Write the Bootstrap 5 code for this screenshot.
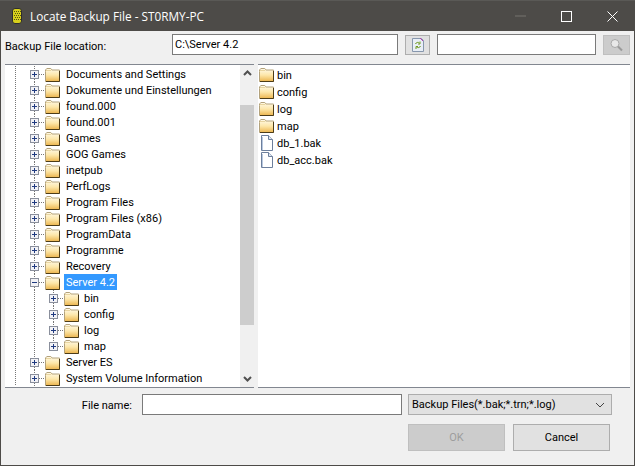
<!DOCTYPE html>
<html lang="en">
<head>
<meta charset="utf-8">
<title>Locate Backup File</title>
<link rel="stylesheet" href="https://cdn.jsdelivr.net/npm/bootstrap@5.3.0/dist/css/bootstrap.min.css">
<style>
html,body{margin:0;background:#f0f0f0;overflow:hidden}
body{font-family:Roboto,"Liberation Sans",Arial,sans-serif;font-size:11px;line-height:16px;color:#000}
.dlg{width:635px;height:466px;background:#f0f0f0;border:1px solid #4d4b48;border-top:0;border-right-width:1px}
.ttl{height:31px;background:#4d4b48;color:#fff;margin:0 -1px;padding-left:11px;font-family:"Open Sans",sans-serif;font-size:11.8px;flex:none;border-top:1px solid #5a5956}
.ttl-text{margin-left:7px}
.winbtns{margin-left:auto;padding-right:0}
.winbtn{width:46px;height:30px;display:flex;align-items:center;justify-content:center}
.locrow{height:33px;padding:3px 4px 0 4px;flex:none}
.loclabel{width:167px;flex:none;padding-top:5px}
.form-control.fld{height:21px;min-height:0;padding:0 2px;border:1px solid #7a7a7a;border-radius:0;font-size:11px;line-height:17px;background:#fff;color:#000}
.fld-a{width:227px}
.fld-b{width:159px}
.fld-c{width:260px}
.tbtn{width:25px;height:20px;padding:0;border-radius:0;border:1px solid #adadad;background:#e1e1e1;display:flex;align-items:center;justify-content:center;margin-top:1px}
.tbtn.off{background:#ccc;border-color:#bfbfbf;width:27px;opacity:1}
.gap-a{margin-left:7px}
.gap-b{margin-left:7px}
.gap-c{margin-left:7px}
.panes{height:324px;padding-left:4px;flex:none}
.treebox{width:249px;border-top:1px solid #828790;border-bottom:1px solid #828790;background:#fff;flex:none}
.treelist{width:235px;padding-top:1px;overflow:hidden}
.trow{height:16px;white-space:nowrap}
.trow svg{flex:none;display:block}
.lbl{padding:0 2px;height:16px;margin-left:-1px;line-height:18px}
.trow svg[width="79"]+.lbl{margin-left:-2px}
.lbl.sel{background:#39f;color:#fff}
.sbar{width:14px;background:#f0f0f0}
.sarrow{height:16px;flex:none;display:flex;align-items:center;justify-content:center}
.strack-a{height:24px;flex:none}
.sthumb{height:220px;background:#cdcdcd;flex:none}
.strack-b{flex:1}
.listbox{width:372px;margin-left:4px;border-top:1px solid #828790;border-bottom:1px solid #828790;background:#fff;padding-top:1px;flex:none}
.lrow{height:17px;padding-left:1px;white-space:nowrap}
.lrow svg{flex:none;display:block}
.lrow span{margin-left:2px;margin-top:2px}
.namerow{padding-top:6px;height:36px;flex:none}
.namelbl{width:131px;text-align:right;padding-right:0;flex:none}
.form-select.typ{width:204px;height:21px;min-height:0;margin-left:6px;padding:0 0 0 3px;border:1px solid #adadad;border-radius:0;background-color:#e1e1e1;font-size:11px;line-height:18px;color:#000;background-size:10px 6px;background-position:right 6px center;background-image:url("data:image/svg+xml,%3csvg xmlns='http://www.w3.org/2000/svg' viewBox='0 0 10 6'%3e%3cpath fill='none' stroke='%23444' d='M1 1l4 4 4-4'/%3e%3c/svg%3e")}
.fldwrap{margin-left:10px}
.btnrow{padding-top:0;padding-left:407px}
.btn.dbtn{width:97px;height:27px;padding:0;border-radius:0;font-size:11px;line-height:25px;color:#000;background:#e1e1e1;border:1px solid #adadad}
.btn.dbtn:disabled{background:#ccc;border-color:#bfbfbf;color:#9d9d9d;opacity:1}
.btn.dbtn+.btn.dbtn{margin-left:8px}
</style>
</head>
<body>
<svg width="0" height="0" class="d-block" aria-hidden="true">
<defs>
<linearGradient id="fg" x1="0" y1="0" x2="0" y2="1"><stop offset="0" stop-color="#fffaea"/><stop offset=".5" stop-color="#fde7aa"/><stop offset="1" stop-color="#ecb54e"/></linearGradient>
<symbol id="folder" viewBox="0 0 16 14" overflow="visible">
<path d="M.5 3.500V2L1.800.5h4L7 2h7.500V13.500H.5z" fill="url(#fg)" stroke="#b3a27c"/>
<path d="M1 2.500h5l1-1" fill="none" stroke="#e8d5a0"/>
<path d="M1 13.500h13.500V3" fill="none" stroke="#4c3c18"/>
</symbol>
<symbol id="plusbox" viewBox="0 0 9 9">
<rect x=".5" y=".5" width="8" height="8" fill="#f2f2f6" stroke="#8a8f9c"/>
<path d="M2 4.500h5M4.500 2v5" stroke="#1f3a80"/>
</symbol>
<symbol id="minusbox" viewBox="0 0 9 9">
<rect x=".5" y=".5" width="8" height="8" fill="#f2f2f6" stroke="#8a8f9c"/>
<path d="M2 4.500h5" stroke="#1f3a80"/>
</symbol>
<symbol id="top-plus" viewBox="0 0 60 16">
<path d="M10.500 0v16M29.500 0v4M29.500 13v3M34 8.500h7" stroke="#777" stroke-dasharray="1 1" fill="none"/>
<use href="#plusbox" x="25" y="4" width="9" height="9"/>
<use href="#folder" x="40" y="2" width="16" height="14"/>
</symbol>
<symbol id="top-minus" viewBox="0 0 60 16">
<path d="M10.500 0v16M29.500 0v4M29.500 13v3M34 8.500h7" stroke="#777" stroke-dasharray="1 1" fill="none"/>
<use href="#minusbox" x="25" y="4" width="9" height="9"/>
<use href="#folder" x="40" y="2" width="16" height="14"/>
</symbol>
<symbol id="sub-plus" viewBox="0 0 79 16">
<path d="M10.500 0v16M29.500 0v16M48.500 0v4M48.500 13v3M53 8.500h7" stroke="#777" stroke-dasharray="1 1" fill="none"/>
<use href="#plusbox" x="44" y="4" width="9" height="9"/>
<use href="#folder" x="59" y="2" width="16" height="14"/>
</symbol>
<symbol id="sub-last" viewBox="0 0 79 16">
<path d="M10.500 0v16M29.500 0v16M48.500 0v4M53 8.500h7" stroke="#777" stroke-dasharray="1 1" fill="none"/>
<use href="#plusbox" x="44" y="4" width="9" height="9"/>
<use href="#folder" x="59" y="2" width="16" height="14"/>
</symbol>
<symbol id="docfile" viewBox="0 0 14 16">
<path d="M1.500.5h7l4 4v11h-11z" fill="#fff" stroke="#6d7f9c"/>
<path d="M8.500.5v4h4" fill="#dfe7f2" stroke="#6d7f9c"/>
<path d="M2.500 2v13" stroke="#b9c9e0"/>
</symbol>
</defs>
</svg>

<div class="dlg d-flex flex-column">
  <div class="ttl d-flex align-items-center">
    <svg width="12" height="16" viewBox="0 0 12 16"><rect x="1.500" y=".5" width="9" height="15" rx="2.500" fill="#d8d01c" stroke="#2e2e2e"/><path d="M3 3h1v1H3zM5 3h1v1H5zM7 3h1v1H7zM9 3h1v1H9zM4 5h1v1H4zM6 5h1v1H6zM8 5h1v1H8zM3 7h1v1H3zM5 7h1v1H5zM7 7h1v1H7zM9 7h1v1H9zM4 9h1v1H4zM6 9h1v1H6zM8 9h1v1H8zM3 11h1v1H3zM5 11h1v1H5zM7 11h1v1H7zM9 11h1v1H9z" fill="#55540e"/></svg>
    <span class="ttl-text">Locate Backup File - ST0RMY-PC</span>
    <div class="winbtns d-flex">
      <div class="winbtn"><svg width="11" height="2" viewBox="0 0 11 2"><path d="M0 1h11" stroke="#77756f"/></svg></div>
      <div class="winbtn"><svg width="11" height="11" viewBox="0 0 11 11"><rect x=".5" y=".5" width="10" height="10" fill="none" stroke="#fff"/></svg></div>
      <div class="winbtn"><svg width="11" height="11" viewBox="0 0 11 11"><path d="M.5.500l10 10M10.500.500l-10 10" stroke="#fff" fill="none"/></svg></div>
    </div>
  </div>

  <div class="locrow d-flex align-items-start">
    <label class="loclabel">Backup File location:</label>
    <input class="form-control fld fld-a" value="C:\Server 4.2">
    <button class="btn tbtn gap-a" type="button" aria-label="Refresh">
      <svg width="12" height="14" viewBox="0 0 12 14"><path d="M.5.500h9l2 2v11H.5z" fill="#e8eef6" stroke="#8797ad"/><path d="M8 0l3 3" stroke="#b040b0"/><path d="M3.500 6a2.500 2.500 0 0 1 4-1M8 3.500V6H6M8.500 8a2.500 2.500 0 0 1-4 1M4 11V8.500h2" fill="none" stroke="#6f9a20"/></svg>
    </button>
    <input class="form-control fld fld-b gap-b">
    <button class="btn tbtn off gap-c" type="button" disabled aria-label="Search">
      <svg width="16" height="14" viewBox="0 0 16 14"><circle cx="6" cy="5.500" r="4" fill="#e8e8e8" stroke="#a8a8a8"/><path d="M9 8.500l4 4" stroke="#9a9a9a" stroke-width="2"/></svg>
    </button>
  </div>

  <div class="panes d-flex">
    <div class="treebox d-flex">
      <div class="treelist">
        <div class="trow d-flex"><svg width="60" height="16"><use href="#top-plus"/></svg><span class="lbl">Documents and Settings</span></div>
        <div class="trow d-flex"><svg width="60" height="16"><use href="#top-plus"/></svg><span class="lbl">Dokumente und Einstellungen</span></div>
        <div class="trow d-flex"><svg width="60" height="16"><use href="#top-plus"/></svg><span class="lbl">found.000</span></div>
        <div class="trow d-flex"><svg width="60" height="16"><use href="#top-plus"/></svg><span class="lbl">found.001</span></div>
        <div class="trow d-flex"><svg width="60" height="16"><use href="#top-plus"/></svg><span class="lbl">Games</span></div>
        <div class="trow d-flex"><svg width="60" height="16"><use href="#top-plus"/></svg><span class="lbl">GOG Games</span></div>
        <div class="trow d-flex"><svg width="60" height="16"><use href="#top-plus"/></svg><span class="lbl">inetpub</span></div>
        <div class="trow d-flex"><svg width="60" height="16"><use href="#top-plus"/></svg><span class="lbl">PerfLogs</span></div>
        <div class="trow d-flex"><svg width="60" height="16"><use href="#top-plus"/></svg><span class="lbl">Program Files</span></div>
        <div class="trow d-flex"><svg width="60" height="16"><use href="#top-plus"/></svg><span class="lbl">Program Files (x86)</span></div>
        <div class="trow d-flex"><svg width="60" height="16"><use href="#top-plus"/></svg><span class="lbl">ProgramData</span></div>
        <div class="trow d-flex"><svg width="60" height="16"><use href="#top-plus"/></svg><span class="lbl">Programme</span></div>
        <div class="trow d-flex"><svg width="60" height="16"><use href="#top-plus"/></svg><span class="lbl">Recovery</span></div>
        <div class="trow d-flex"><svg width="60" height="16"><use href="#top-minus"/></svg><span class="lbl sel">Server 4.2</span></div>
        <div class="trow d-flex"><svg width="79" height="16"><use href="#sub-plus"/></svg><span class="lbl">bin</span></div>
        <div class="trow d-flex"><svg width="79" height="16"><use href="#sub-plus"/></svg><span class="lbl">config</span></div>
        <div class="trow d-flex"><svg width="79" height="16"><use href="#sub-plus"/></svg><span class="lbl">log</span></div>
        <div class="trow d-flex"><svg width="79" height="16"><use href="#sub-last"/></svg><span class="lbl">map</span></div>
        <div class="trow d-flex"><svg width="60" height="16"><use href="#top-plus"/></svg><span class="lbl">Server ES</span></div>
        <div class="trow d-flex"><svg width="60" height="16"><use href="#top-plus"/></svg><span class="lbl">System Volume Information</span></div>
      </div>
      <div class="sbar d-flex flex-column">
        <div class="sarrow"><svg width="9" height="6" viewBox="0 0 9 6"><path d="M1 5l3.500-3.500L8 5" fill="none" stroke="#505050" stroke-width="2"/></svg></div>
        <div class="strack-a"></div>
        <div class="sthumb"></div>
        <div class="strack-b"></div>
        <div class="sarrow"><svg width="9" height="6" viewBox="0 0 9 6"><path d="M1 1l3.500 3.500L8 1" fill="none" stroke="#505050" stroke-width="2"/></svg></div>
      </div>
    </div>
    <div class="listbox">
      <div class="lrow d-flex align-items-center"><svg width="16" height="14"><use href="#folder"/></svg><span>bin</span></div>
      <div class="lrow d-flex align-items-center"><svg width="16" height="14"><use href="#folder"/></svg><span>config</span></div>
      <div class="lrow d-flex align-items-center"><svg width="16" height="14"><use href="#folder"/></svg><span>log</span></div>
      <div class="lrow d-flex align-items-center"><svg width="16" height="14"><use href="#folder"/></svg><span>map</span></div>
      <div class="lrow d-flex align-items-center"><svg width="16" height="16"><use href="#docfile" width="14" height="16" x="1"/></svg><span>db_1.bak</span></div>
      <div class="lrow d-flex align-items-center"><svg width="16" height="16"><use href="#docfile" width="14" height="16" x="1"/></svg><span>db_acc.bak</span></div>
    </div>
  </div>

  <div class="namerow d-flex align-items-start">
    <label class="namelbl pt-1">File name:</label>
    <div class="fldwrap"><input class="form-control fld fld-c"></div>
    <select class="form-select typ"><option>Backup Files(*.bak;*.trn;*.log)</option></select>
  </div>
  <div class="btnrow d-flex">
    <button class="btn dbtn" type="button" disabled>OK</button>
    <button class="btn dbtn" type="button">Cancel</button>
  </div>
</div>
</body>
</html>
